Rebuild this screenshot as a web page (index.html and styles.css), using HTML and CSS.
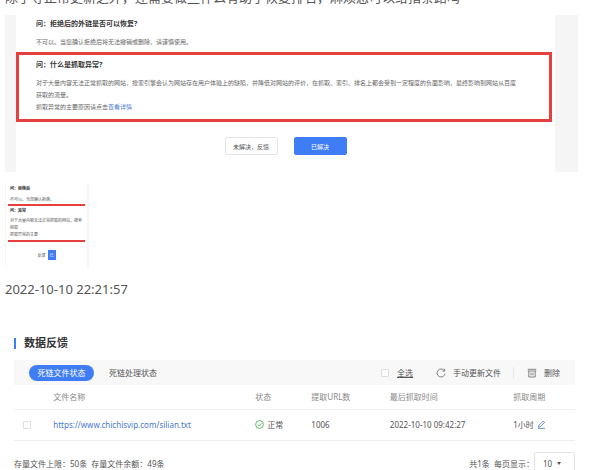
FILE: index.html
```html
<!DOCTYPE html>
<html lang="zh-CN">
<head>
  <meta charset="UTF-8">
  <meta name="viewport" content="width=device-width, initial-scale=1.0">
  <title>数据反馈</title>
  <link rel="stylesheet" href="styles.css">
</head>
<body>
  <p class="question">除了等正常更新之外，还需要做些什么有助于恢复排名，麻烦您可以给指条路吗</p>

  <section class="faq">
    <div class="faq-page">
      <div class="faq-item">
        <h3>问：拒绝后的外链是否可以恢复?</h3>
        <p>不可以。当您确认拒绝后将无法撤销或删除，请谨慎使用。</p>
      </div>
      <div class="faq-item marked">
        <h3>问：什么是抓取异常?</h3>
        <p>对于大量内容无法正常抓取的网站，搜索引擎会认为网站存在用户体验上的缺陷，并降低对网站的评价，在抓取、索引、排名上都会受到一定程度的负面影响，最终影响到网站从百度<br>获取的流量。</p>
        <p>抓取异常的主要原因请点击<a href="#">查看详情</a></p>
      </div>
      <div class="faq-buttons">
        <button type="button">未解决，反馈</button>
        <button type="button" class="primary">已解决</button>
      </div>
    </div>
  </section>

  <section class="thumb">
    <h4>问：拒绝后</h4>
    <p>不可以。当您确认拒绝。</p>
    <div class="thumb-marked">
      <h4>问：异常</h4>
      <p>对于大量内容无法正常抓取的网站，搜索<br>获取<br>抓取异常的主要</p>
    </div>
    <div class="thumb-buttons">
      <button type="button">反馈</button>
      <button type="button" class="primary">已</button>
    </div>
  </section>

  <time class="date">2022-10-10 22:21:57</time>

  <main class="feedback">
    <h2>数据反馈</h2>
    <div class="toolbar">
      <button type="button" class="tab active">死链文件状态</button>
      <button type="button" class="tab">死链处理状态</button>
      <label class="check-all"><input type="checkbox"><span>全选</span></label>
      <button type="button" class="tool refresh">
        <svg width="10" height="10" viewBox="0 0 10 10"><path d="M8.3 2.6A4 4 0 1 0 9 5.7M8.7 .8v2.3H6.4"/></svg>
        手动更新文件
      </button>
      <button type="button" class="tool delete">
        <svg width="10" height="10" viewBox="0 0 10 10"><path d="M.8 1.3h8.4M.8 3h8.4M1.8 3v6h6.4V3M4 4.6v2.8M6 4.6v2.8"/></svg>
        删除
      </button>
    </div>
    <table>
      <colgroup>
        <col class="col-check"><col class="col-name"><col class="col-state"><col class="col-count"><col class="col-time"><col>
      </colgroup>
      <thead>
        <tr>
          <th></th>
          <th>文件名称</th>
          <th>状态</th>
          <th>提取URL数</th>
          <th>最后抓取时间</th>
          <th>抓取周期</th>
        </tr>
      </thead>
      <tbody>
        <tr>
          <td class="cell-check"><input type="checkbox" aria-label="选择文件"></td>
          <td><a href="#">https://www.chichisvip.com/silian.txt</a></td>
          <td>
            <span class="with-icon">
              <svg class="ok" width="9" height="9" viewBox="0 0 9 9"><circle cx="4.5" cy="4.5" r="3.9"/><path d="M2.6 4.5l1.5 1.5 2.5-2.8"/></svg>
              正常
            </span>
          </td>
          <td>1006</td>
          <td>2022-10-10 09:42:27</td>
          <td>
            <span class="with-icon">
              1小时
              <svg class="edit" width="9" height="9" viewBox="0 0 9 9"><path d="M1.3 7.3l.6-2L6.2 1l1.5 1.4-4.4 4.3zM1 8.4h7"/></svg>
            </span>
          </td>
        </tr>
      </tbody>
    </table>
    <div class="footer">
      <span>存量文件上限：50条&nbsp; 存量文件余额：49条</span>
      <label class="pager">共1条&nbsp; 每页显示：
        <span class="select-box">
          <select><option>10</option><option>20</option></select>
        </span>
      </label>
    </div>
  </main>
</body>
</html>
```

FILE: styles.css
```css
* {
  box-sizing: border-box;
}

body {
  font-family: "Noto Sans", "Noto Sans CJK SC", sans-serif;
  margin: 0;
  padding: 0 24px 0 5px;
  height: 100vh;
  overflow: hidden;
  background: #fff;
  color: #555;
}

h2, h3, h4, p {
  margin: 0;
}

a {
  color: #4a78d0;
  text-decoration: none;
}

button {
  font-family: inherit;
  padding: 0;
  border: none;
  background: none;
  color: inherit;
  cursor: pointer;
}

input[type="checkbox"] {
  appearance: none;
  width: 8px;
  height: 8px;
  margin: 0;
  border: 1px solid #ddd;
  border-radius: 1px;
  background: #fff;
}

.question {
  margin-top: -12px;
  font-size: 13px;
  line-height: 18px;
  white-space: nowrap;
}

/* FAQ */
.faq {
  margin-top: 9px;
  padding: 0 23px 0 11px;
  background: #f5f5f5;
}

.faq-page {
  padding: 0 3px 17px 0;
  background: #fff;
}

.faq-item {
  padding: 0 17px 4px 20px;
}

.faq-item h3 {
  font-size: 7px;
  line-height: 18px;
  color: #333;
}

.faq-item p {
  font-size: 6px;
  line-height: 12px;
  color: #666;
}

.faq-item h3 + p {
  padding-top: 3px;
}

.faq-item.marked {
  padding: 1px 14px 6px 17px;
  border: 3px solid #e5403f;
}

.faq-buttons {
  display: flex;
  justify-content: center;
  gap: 16px;
  padding: 15px 0 0 3px;
}

.faq-buttons button {
  width: 53px;
  height: 18px;
  border: 1px solid #e4e4e4;
  border-radius: 2px;
  font-size: 6px;
}

.faq-buttons .primary,
.thumb-buttons .primary {
  border-color: #3f7df6;
  background: #3f7df6;
  color: #fff;
}

/* narrow copy of the FAQ */
.thumb {
  width: 84px;
  margin-top: 12px;
  padding: 0 2px 7px;
  border: solid #f5f5f5;
  border-width: 0 2px 0 1px;
}

.thumb h4 {
  padding-left: 2px;
  font-size: 4px;
  line-height: 9px;
  color: #333;
}

.thumb p {
  padding: 2px 0 2px 2px;
  font-size: 4px;
  line-height: 7px;
}

.thumb > p {
  padding-bottom: 0;
  line-height: 9px;
}

.thumb-marked {
  border: solid #e5403f;
  border-width: 2px 0;
}

.thumb-buttons {
  display: flex;
  justify-content: center;
  gap: 2px;
  padding-top: 8px;
}

.thumb-buttons button {
  width: 8px;
  height: 10px;
  font-size: 4px;
}

.date {
  display: block;
  margin-top: 13px;
  font-size: 13px;
  line-height: 18px;
}

/* feedback table */
.feedback {
  margin: 38px 3px 0 9px;
  font-size: 8px;
  line-height: 12px;
}

.feedback h2 {
  display: flex;
  align-items: center;
  gap: 8px;
  margin-bottom: 10px;
  font-size: 11px;
  line-height: 14px;
  color: #333;
}

.feedback h2::before {
  content: "";
  width: 2px;
  height: 11px;
  background: #3f7df6;
}

.toolbar {
  display: flex;
  align-items: center;
  height: 25px;
  padding: 0 15px;
  background: #f8f8f8;
}

.toolbar button {
  font-size: 8px;
  line-height: 12px;
}

.tab {
  height: 16px;
  padding: 0 8px;
  border-radius: 8px;
}

.tab + .tab {
  margin-left: 7px;
}

.tab.active {
  width: 65px;
  background: #3f7df6;
  color: #fff;
}

.check-all {
  display: flex;
  align-items: center;
  gap: 8px;
  margin-left: auto;
  text-decoration: underline;
}

.tool {
  display: flex;
  align-items: center;
  gap: 7px;
}

.refresh {
  margin-left: 23px;
  padding-right: 12px;
  border-right: 1px solid #e8e8e8;
}

.delete {
  margin-left: 13px;
}

svg {
  flex: none;
  fill: none;
  stroke: #666;
  stroke-width: .8;
}

.ok {
  stroke: #3fa648;
}

.edit {
  stroke: #4a78d0;
}

table {
  width: 100%;
  table-layout: fixed;
  border-collapse: collapse;
}

.col-check { width: 7%; }
.col-name { width: 36%; }
.col-state { width: 10%; }
.col-count { width: 14%; }
.col-time { width: 22%; }

th, td {
  padding: 0;
  border-bottom: 1px solid #eee;
  text-align: left;
}

th {
  height: 24px;
  font-weight: normal;
  color: #888;
}

td {
  height: 31px;
}

.cell-check {
  padding-left: 9px;
}

td input {
  display: block;
}

.with-icon {
  display: flex;
  align-items: center;
  gap: 3px;
}

.footer {
  display: flex;
  align-items: center;
  justify-content: space-between;
  margin-top: 11px;
}

.pager {
  display: flex;
  align-items: center;
}

.select-box {
  display: flex;
  align-items: center;
  width: 41px;
  height: 24px;
  padding: 0 13px 0 8px;
  border: 1px solid #e4e4e4;
  border-radius: 2px;
}

.select-box::after {
  content: "";
  flex: none;
  border: solid transparent;
  border-width: 3px 2px 0;
  border-top-color: #555;
}

.select-box select {
  appearance: none;
  flex: 1;
  min-width: 0;
  padding: 0;
  border: none;
  background: none;
  font: inherit;
  color: inherit;
}
```
